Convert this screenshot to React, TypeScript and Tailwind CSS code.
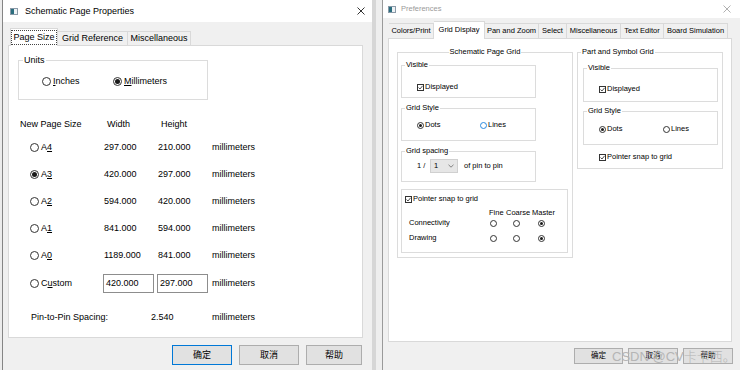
import React from "react";

const F = "font-['Liberation_Sans','Noto_Sans_CJK_SC',sans-serif]";

function RL({ on }: { on?: boolean }) {
  return (
    <span className="inline-flex w-[9px] h-[9px] shrink-0 items-center justify-center rounded-full border border-[#333] bg-white">
      {on && <span className="w-[5px] h-[5px] rounded-full bg-[#1a1a1a]" />}
    </span>
  );
}

function RR({ on, blue }: { on?: boolean; blue?: boolean }) {
  return (
    <span
      className={
        blue
          ? "inline-flex w-[7px] h-[7px] shrink-0 items-center justify-center rounded-full border border-[#2a8ae0] bg-white"
          : "inline-flex w-[7px] h-[7px] shrink-0 items-center justify-center rounded-full border border-[#333] bg-white"
      }
    >
      {on && <span className="w-[3px] h-[3px] rounded-full bg-[#1a1a1a]" />}
    </span>
  );
}

function CB() {
  return (
    <span className="inline-flex w-[7px] h-[7px] shrink-0 items-center justify-center border border-[#333] bg-white">
      <svg width="5" height="5" viewBox="0 0 5 5">
        <path d="M0.5 2.5 L2 4 L4.6 0.8" fill="none" stroke="#222" strokeWidth="0.8" />
      </svg>
    </span>
  );
}

function WinIcon() {
  return (
    <span className="flex w-[8px] h-[7px] shrink-0 border border-[#8a9aa8] bg-[#dfe6ec]">
      <span className="w-[3px] h-full bg-[#2b6d7e]" />
      <span className="flex-1 bg-[#eef2f5]" />
    </span>
  );
}

function Close({ color }: { color: string }) {
  return (
    <svg width="8" height="8" viewBox="0 0 8 8" className="shrink-0">
      <path d="M0.5 0.5 L7.5 7.5 M7.5 0.5 L0.5 7.5" stroke={color} strokeWidth="1" />
    </svg>
  );
}

function SizeRow({ label, u, rest, w, h, on }: { label: string; u: string; rest?: string; w: string; h: string; on?: boolean }) {
  return (
    <div className="flex h-[27px] items-center pl-[11px]">
      <div className="flex w-[84px] items-center pl-[10px]">
        <RL on={on} />
        <span className="ml-[2px]">
          {label}
          <span className="underline underline-offset-1">{u}</span>
          {rest}
        </span>
      </div>
      <div className="w-[54px]">{w}</div>
      <div className="w-[54px]">{h}</div>
      <div>millimeters</div>
    </div>
  );
}

function LeftDialog() {
  return (
    <div className="flex h-[370px] w-[370px] shrink-0 flex-col border-l border-[#858585] bg-[#f0f0f0] text-[9px] leading-none">
      <div className="flex h-[22px] items-center bg-white pl-[7px] pr-[7px]">
        <WinIcon />
        <span className="ml-[7px] flex-1 text-[9px] text-black">Schematic Page Properties</span>
        <Close color="#333" />
      </div>
      <div className="flex flex-col pl-[5px] pt-[6px]">
        <div className="relative z-10 flex h-[17px] items-end pl-[2px]">
          <div className="mb-[-1px] flex h-[18px] w-[48px] items-center justify-center border border-b-0 border-[#d9d9d9] bg-white">
            <span className="whitespace-nowrap border border-dotted border-[#444] px-[1px] py-[2px]">Page Size</span>
          </div>
          <div className="flex h-[14px] w-[70px] items-center justify-center whitespace-nowrap border border-b-0 border-l-0 border-[#d9d9d9] bg-[#f0f0f0]">
            Grid Reference
          </div>
          <div className="flex h-[14px] w-[63px] items-center justify-center whitespace-nowrap border border-b-0 border-l-0 border-[#d9d9d9] bg-[#f0f0f0]">
            Miscellaneous
          </div>
        </div>
        <div className="flex h-[293px] w-[355px] flex-col border border-[#d9d9d9] bg-white">
          <div className="relative ml-[9px] mt-[14px] h-[40px] w-[190px] border border-[#dcdcdc]">
            <span className="absolute left-[4px] top-[-5px] bg-white px-[1px]">Units</span>
            <div className="mt-[14px] flex h-[12px] items-center pl-[23px]">
              <div className="flex w-[71px] items-center">
                <RL />
                <span className="ml-[2px]">
                  <span className="underline underline-offset-1">I</span>nches
                </span>
              </div>
              <div className="flex items-center">
                <RL on />
                <span className="ml-[2px]">
                  <span className="underline underline-offset-1">M</span>illimeters
                </span>
              </div>
            </div>
          </div>
          <div className="mt-[18px] flex h-[12px] items-center pl-[11px]">
            <div className="w-[84px]">New Page Size</div>
            <div className="w-[54px] pl-[3px]">Width</div>
            <div className="pl-[3px]">Height</div>
          </div>
          <div className="mt-[4px] flex flex-col">
            <SizeRow label="A" u="4" w="297.000" h="210.000" />
            <SizeRow label="A" u="3" w="420.000" h="297.000" on />
            <SizeRow label="A" u="2" w="594.000" h="420.000" />
            <SizeRow label="A" u="1" w="841.000" h="594.000" />
            <SizeRow label="A" u="0" w="1189.000" h="841.000" />
            <div className="flex h-[28px] items-center pl-[11px]">
              <div className="flex w-[84px] items-center pl-[10px]">
                <RL />
                <span className="ml-[2px]">
                  C<span className="underline underline-offset-1">u</span>stom
                </span>
              </div>
              <div className="w-[54px]">
                <div className="ml-[-1px] flex h-[19px] w-[51px] items-center border border-[#8d8d8d] bg-white pl-[2px]">420.000</div>
              </div>
              <div className="w-[54px]">
                <div className="ml-[-1px] flex h-[19px] w-[51px] items-center border border-[#8d8d8d] bg-white pl-[2px]">297.000</div>
              </div>
              <div>millimeters</div>
            </div>
            <div className="mt-[13px] flex h-[14px] items-center pl-[11px]">
              <div className="w-[131px] pl-[11px]">Pin-to-Pin Spacing:</div>
              <div className="w-[61px]">2.540</div>
              <div>millimeters</div>
            </div>
          </div>
        </div>
        <div className="mt-[7px] flex gap-[7px] pl-[164px]">
          <div className="flex h-[20px] w-[60px] items-center justify-center border border-[#0078d7] bg-[#e1e1e1]">确定</div>
          <div className="flex h-[20px] w-[60px] items-center justify-center border border-[#adadad] bg-[#e1e1e1]">取消</div>
          <div className="flex h-[20px] w-[56px] items-center justify-center border border-[#adadad] bg-[#e1e1e1]">帮助</div>
        </div>
      </div>
    </div>
  );
}

function RightDialog() {
  const tab = "flex h-[15px] items-center justify-center whitespace-nowrap border border-b-0 border-l-0 border-[#d9d9d9] bg-[#f0f0f0]";
  return (
    <div className="flex h-[370px] flex-1 flex-col border-l border-[#9a9a9a] bg-[#f0f0f0] text-[7.5px] leading-none">
      <div className="flex h-[18px] items-center bg-white pl-[5px] pr-[9px]">
        <WinIcon />
        <span className="ml-[5px] flex-1 text-[7.5px] text-[#9a9a9a]">Preferences</span>
        <Close color="#b0b0b0" />
      </div>
      <div className="flex flex-col pl-[5px] pt-[3px]">
        <div className="relative z-10 flex h-[17px] items-end pl-[1px]">
          <div className={`${tab} w-[45px] border-l`}>Colors/Print</div>
          <div className="mb-[-1px] flex h-[18px] w-[51px] items-center justify-center whitespace-nowrap border border-b-0 border-l-0 border-[#d9d9d9] bg-white pb-[2px]">
            Grid Display
          </div>
          <div className={`${tab} w-[54px]`}>Pan and Zoom</div>
          <div className={`${tab} w-[28px]`}>Select</div>
          <div className={`${tab} w-[54px]`}>Miscellaneous</div>
          <div className={`${tab} w-[43px]`}>Text Editor</div>
          <div className={`${tab} w-[64px]`}>Board Simulation</div>
        </div>
        <div className="flex h-[304px] w-[344px] items-start border border-[#d9d9d9] bg-white pl-[8px] pt-[13px]">
          <div className="relative flex h-[206px] w-[176px] flex-col border border-[#dcdcdc] pl-[3px] pt-[12px]">
            <div className="absolute left-0 right-0 top-[-5px] flex justify-center">
              <span className="bg-white px-[1px]">Schematic Page Grid</span>
            </div>
            <div className="relative h-[33px] w-[135px] border border-[#dcdcdc] pl-[15px] pt-[16px]">
              <span className="absolute left-[3px] top-[-5px] bg-white px-[1px]">Visible</span>
              <div className="flex h-[10px] items-center">
                <CB />
                <span className="ml-[1px]">Displayed</span>
              </div>
            </div>
            <div className="relative mt-[10px] h-[33px] w-[135px] border border-[#dcdcdc] pl-[15px] pt-[11px]">
              <span className="absolute left-[3px] top-[-5px] bg-white px-[1px]">Grid Style</span>
              <div className="flex h-[10px] items-center">
                <div className="flex w-[63px] items-center">
                  <RR on />
                  <span className="ml-[1px]">Dots</span>
                </div>
                <RR blue />
                <span className="ml-[1px]">Lines</span>
              </div>
            </div>
            <div className="relative mt-[10px] h-[31px] w-[135px] border border-[#dcdcdc] pl-[15px] pt-[7px]">
              <span className="absolute left-[3px] top-[-5px] bg-white px-[1px]">Grid spacing</span>
              <div className="flex h-[14px] items-center">
                <span className="w-[13px]">1 /</span>
                <div className="flex h-[14px] w-[28px] items-center justify-between border border-[#d0d0d0] bg-[#e6e6e6] pl-[3px] pr-[3px]">
                  <span>1</span>
                  <svg width="6" height="4" viewBox="0 0 6 4">
                    <path d="M0.5 0.8 L3 3.2 L5.5 0.8" fill="none" stroke="#666" strokeWidth="0.8" />
                  </svg>
                </div>
                <span className="ml-[6px]">of pin to pin</span>
              </div>
            </div>
            <div className="mt-[7px] flex h-[64px] w-[167px] flex-col border border-[#dcdcdc] pt-[4px]">
              <div className="flex h-[10px] items-center pl-[3px]">
                <CB />
                <span className="ml-[1px]">Pointer snap to grid</span>
              </div>
              <div className="mt-[4px] flex h-[10px] items-center pl-[7px]">
                <span className="w-[80px]" />
                <span className="w-[17px]">Fine</span>
                <span className="w-[26px]">Coarse</span>
                <span>Master</span>
              </div>
              <div className="flex h-[10px] items-center pl-[7px]">
                <span className="w-[80px]">Connectivity</span>
                <span className="ml-[1px] flex"><RR /></span>
                <span className="ml-[16px] flex"><RR /></span>
                <span className="ml-[18px] flex"><RR on /></span>
              </div>
              <div className="mt-[5px] flex h-[10px] items-center pl-[7px]">
                <span className="w-[80px]">Drawing</span>
                <span className="ml-[1px] flex"><RR /></span>
                <span className="ml-[16px] flex"><RR /></span>
                <span className="ml-[18px] flex"><RR on /></span>
              </div>
            </div>
          </div>
          <div className="relative ml-[4px] flex h-[117px] w-[146px] flex-col border border-[#dcdcdc] pl-[5px] pt-[15px]">
            <span className="absolute left-[3px] top-[-5px] bg-white px-[1px]">Part and Symbol Grid</span>
            <div className="relative h-[34px] w-[135px] border border-[#dcdcdc] pl-[15px] pt-[15px]">
              <span className="absolute left-[3px] top-[-5px] bg-white px-[1px]">Visible</span>
              <div className="flex h-[10px] items-center">
                <CB />
                <span className="ml-[1px]">Displayed</span>
              </div>
            </div>
            <div className="relative mt-[9px] h-[34px] w-[135px] border border-[#dcdcdc] pl-[15px] pt-[12px]">
              <span className="absolute left-[3px] top-[-5px] bg-white px-[1px]">Grid Style</span>
              <div className="flex h-[10px] items-center">
                <div className="flex w-[64px] items-center">
                  <RR on />
                  <span className="ml-[1px]">Dots</span>
                </div>
                <RR />
                <span className="ml-[1px]">Lines</span>
              </div>
            </div>
            <div className="mt-[7px] flex h-[10px] items-center pl-[16px]">
              <CB />
              <span className="ml-[1px]">Pointer snap to grid</span>
            </div>
          </div>
        </div>
        <div className="mt-[6px] flex gap-[5px] pl-[186px]">
          <div className="flex h-[16px] w-[49px] items-center justify-center border border-[#adadad] bg-[#e1e1e1]">确定</div>
          <div className="flex h-[16px] w-[50px] items-center justify-center border border-[#adadad] bg-[#e1e1e1]">取消</div>
          <div className="flex h-[16px] w-[50px] items-center justify-center border border-[#adadad] bg-[#e1e1e1]">帮助</div>
        </div>
      </div>
    </div>
  );
}

export default function App() {
  return (
    <div className={`${F} relative flex h-[370px] w-[740px] overflow-hidden bg-[#e9e9e9] text-black`}>
      <div className="w-[2px] shrink-0 bg-[#ececec]" />
      <LeftDialog />
      <div className="flex w-[10px] shrink-0">
        <span className="w-[4px] bg-[#d6d6d6]" />
        <span className="flex-1 bg-[#eeeeee]" />
      </div>
      <RightDialog />
      <div className="pointer-events-none absolute left-[612px] top-[350px] whitespace-nowrap text-[13px] font-light leading-none text-[#b5b5b5]">
        CSDN @CV卡卡西。
      </div>
    </div>
  );
}
